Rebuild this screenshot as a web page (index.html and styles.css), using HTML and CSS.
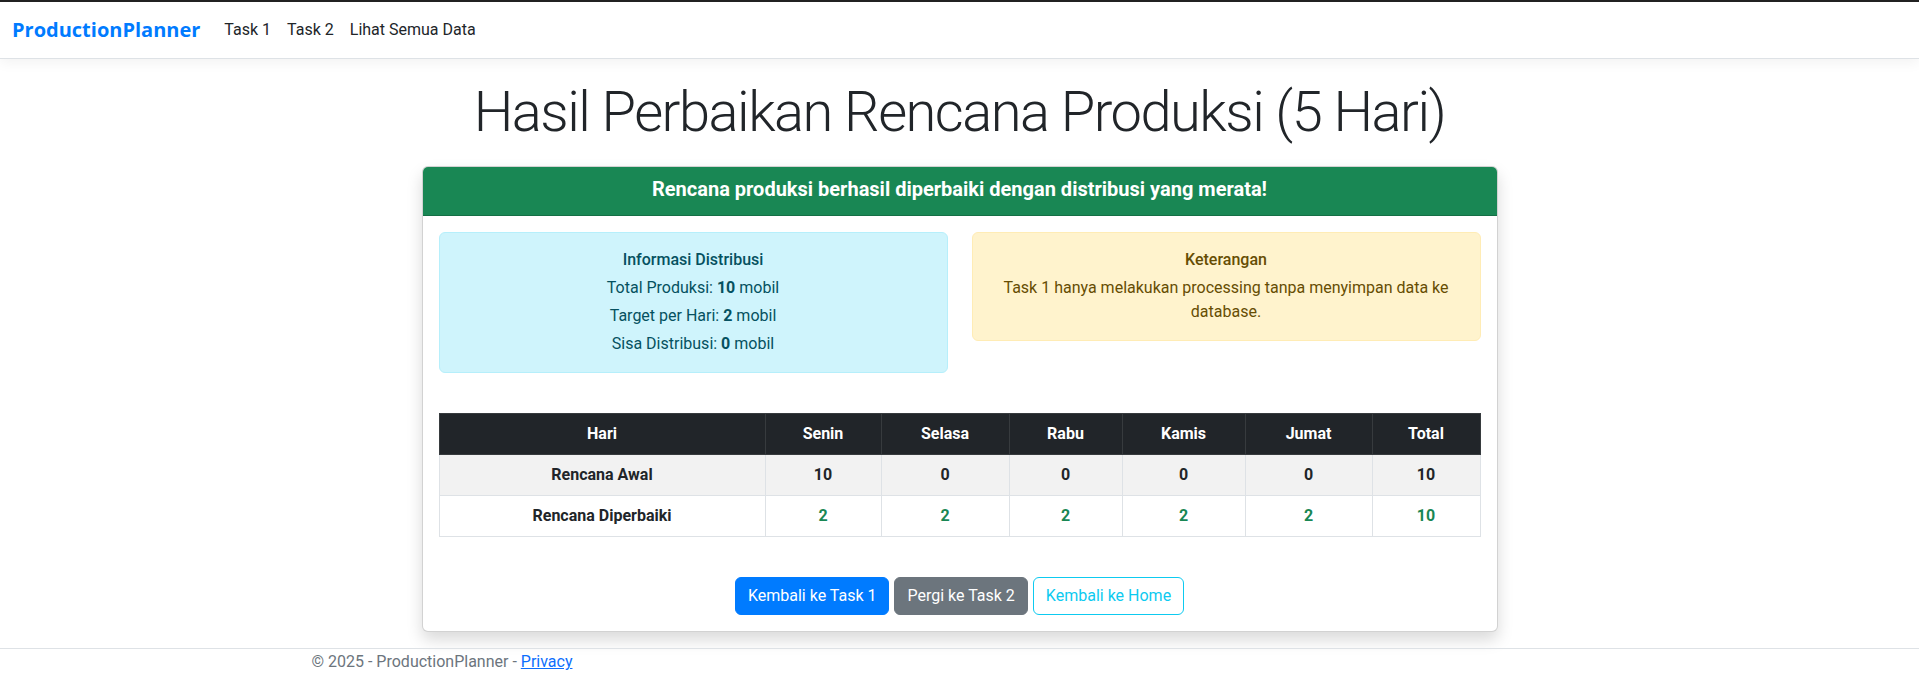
FILE: index.html
```html
<!DOCTYPE html>
<html lang="id">
<head>
<meta charset="utf-8">
<title>Hasil Perbaikan Rencana Produksi</title>
<link rel="stylesheet" href="styles.css">
</head>
<body>
<div class="topline"></div>
<header class="navbar">
  <a class="brand" href="#">ProductionPlanner</a>
  <ul class="nav">
    <li><a class="nav-link" href="#">Task 1</a></li>
    <li><a class="nav-link" href="#">Task 2</a></li>
    <li><a class="nav-link" href="#">Lihat Semua Data</a></li>
  </ul>
</header>
<main class="container main">
  <h1 class="title">Hasil Perbaikan Rencana Produksi (5 Hari)</h1>
  <div class="card">
    <div class="card-header">
      <h5 class="card-title">Rencana produksi berhasil diperbaiki dengan distribusi yang merata!</h5>
    </div>
    <div class="card-body">
      <div class="alerts">
        <div class="alert alert-info">
          <h6 class="alert-title">Informasi Distribusi</h6>
          <p class="line">Total Produksi: <strong>10</strong> mobil</p>
          <p class="line">Target per Hari: <strong>2</strong> mobil</p>
          <p class="line last">Sisa Distribusi: <strong>0</strong> mobil</p>
        </div>
        <div class="alert alert-warning">
          <h6 class="alert-title">Keterangan</h6>
          <p class="line last">Task 1 hanya melakukan processing tanpa menyimpan data ke database.</p>
        </div>
      </div>
      <table class="table">
        <colgroup>
          <col class="c-hari"><col class="c-senin"><col class="c-selasa"><col class="c-rabu"><col class="c-kamis"><col class="c-jumat"><col class="c-total">
        </colgroup>
        <thead>
          <tr><th>Hari</th><th>Senin</th><th>Selasa</th><th>Rabu</th><th>Kamis</th><th>Jumat</th><th>Total</th></tr>
        </thead>
        <tbody>
          <tr class="striped"><th>Rencana Awal</th><td>10</td><td>0</td><td>0</td><td>0</td><td>0</td><td>10</td></tr>
          <tr><th>Rencana Diperbaiki</th><td class="ok">2</td><td class="ok">2</td><td class="ok">2</td><td class="ok">2</td><td class="ok">2</td><td class="ok">10</td></tr>
        </tbody>
      </table>
      <div class="actions">
        <a class="btn btn-primary" href="#">Kembali ke Task 1</a>
        <a class="btn btn-secondary" href="#">Pergi ke Task 2</a>
        <a class="btn btn-outline-info" href="#">Kembali ke Home</a>
      </div>
    </div>
  </div>
</main>
<footer class="footer">
  <div class="container">© 2025 - ProductionPlanner - <a href="#">Privacy</a></div>
</footer>
</body>
</html>
```

FILE: styles.css
```css
* { box-sizing: border-box; }
html, body { margin: 0; padding: 0; }
body {
  font-family: "Segoe UI", Roboto, "Liberation Sans", sans-serif;
  font-size: 16px;
  line-height: 1.5;
  color: #212529;
  background: #fff;
}
.topline { height: 2px; background: #222; }

.navbar {
  display: flex;
  align-items: center;
  padding: 8px 12px;
  background: #fff;
  border-bottom: 1px solid #dee2e6;
  box-shadow: 0 4px 12px rgba(0,0,0,.05);
}
.brand {
  font-family: "Open Sans", "Segoe UI", Roboto, sans-serif;
  color: #007bff;
  font-weight: 700;
  font-size: 20px;
  line-height: 30px;
  padding: 5px 0;
  margin-right: 16px;
  text-decoration: none;
}
.nav { display: flex; list-style: none; margin: 0; padding: 0; }
.nav-link {
  display: block;
  padding: 8px;
  color: #212529;
  text-decoration: none;
}

.container { width: 1320px; margin: 0 auto; padding: 0 12px; }
.main { padding-top: 16px; padding-bottom: 16px; }
.title {
  font-size: 56px;
  font-weight: 300;
  line-height: 1.2;
  letter-spacing: -1.5px;
  text-align: center;
  padding-top: 4px;
  margin: 0 0 20px;
}

.card {
  width: 1076px;
  margin: 0 auto;
  border: 1px solid rgba(0,0,0,.175);
  border-radius: 6px;
  box-shadow: 0 8px 16px rgba(0,0,0,.15);
  background: #fff;
}
.card-header {
  background: #198754;
  color: #fff;
  text-align: center;
  padding: 8px 16px;
  border-bottom: 1px solid rgba(0,0,0,.175);
  border-radius: 5px 5px 0 0;
}
.card-title {
  margin: 0 0 6px;
  font-size: 20px;
  line-height: 1.2;
  font-weight: 700;
  padding-top: 2px;
}
.card-body { padding: 16px; }

.alerts {
  display: grid;
  grid-template-columns: 1fr 1fr;
  column-gap: 24px;
  align-items: start;
  margin-bottom: 24px;
}
.alert {
  padding: 16px;
  border: 1px solid transparent;
  border-radius: 6px;
  text-align: center;
  margin-bottom: 16px;
}
.alert-info { background: #cff4fc; border-color: #b6effb; color: #055160; }
.alert-warning { background: #fff3cd; border-color: #ffecb5; color: #664d03; }
.alert-title { font-size: 16px; line-height: 1.2; font-weight: 500; margin: 0 0 7px; padding-top: 1px; }
.line { margin: 0 0 4px; }
.line.last { margin-bottom: 0; }

.table {
  width: 100%;
  table-layout: fixed;
  border-collapse: collapse;
  text-align: center;
}
.table th, .table td {
  padding: 8px;
  border: 1px solid #dee2e6;
  font-weight: 700;
  line-height: 24px;
}
.table thead th { background: #212529; color: #fff; border-color: #373b3e; }
.table .striped th, .table .striped td { background: #f2f2f2; }
.table .ok { color: #198754; }
.c-hari { width: 326px; }
.c-senin { width: 116px; }
.c-selasa { width: 128px; }
.c-rabu { width: 113px; }
.c-kamis { width: 123px; }
.c-jumat { width: 127px; }
.c-total { width: 108px; }

.actions {
  display: flex;
  justify-content: center;
  gap: 5px;
  padding-top: 40px;
}
.btn {
  display: inline-block;
  padding: 6px 12px;
  font-size: 16px;
  line-height: 24px;
  border: 1px solid transparent;
  border-radius: 6px;
  text-decoration: none;
}
.btn-primary { background: #007bff; border-color: #007bff; color: #fff; }
.btn-secondary { background: #6c757d; border-color: #6c757d; color: #fff; }
.btn-outline-info { background: #fff; border-color: #0dcaf0; color: #0dcaf0; }

.footer {
  border-top: 1px solid #dee2e6;
  color: #6c757d;
  line-height: 24px;
  padding-top: 1px;
}
.footer a { color: #0d6efd; text-decoration: underline; }
```
